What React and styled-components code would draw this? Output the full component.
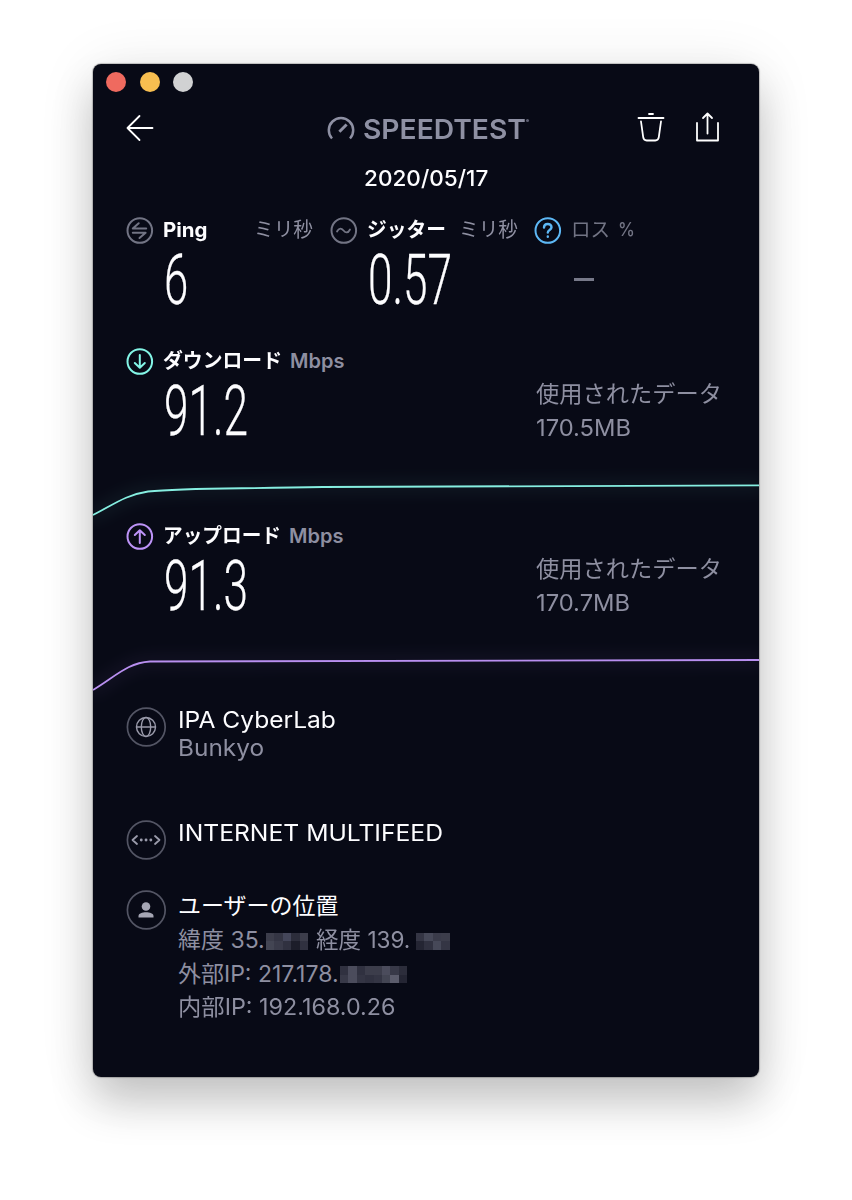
import React, { useLayoutEffect, useRef, useState } from "react";
import styled, { createGlobalStyle } from "styled-components";

const Global = createGlobalStyle`
  * { box-sizing: border-box; }
  html, body { margin: 0; background: #fff; }
  body { font-family: Inter, "Noto Sans CJK JP", sans-serif; height: 1200px; overflow: hidden; }
  svg { display: block; flex: none; overflow: visible; fill: none; stroke-linecap: round; stroke-linejoin: round; }
`;

const Desktop = styled.main`
  height: 1200px;
  padding: 64px 93px;
`;

const Window = styled.section`
  width: 666px;
  height: 1013px;
  background: #080a16;
  border-radius: 8px;
  overflow: hidden;
  display: flex;
  flex-direction: column;
  box-shadow: 0 0 1px 1px rgba(0, 0, 0, 0.22), 0 26px 44px rgba(0, 0, 0, 0.2), 0 4px 60px rgba(0, 0, 0, 0.09);
`;

const TitleBar = styled.div`
  height: 35px;
  padding: 7.5px 0 0 13.3px;
  display: flex;
  gap: 13.3px;
`;

const Light = styled.i`
  width: 20px;
  height: 20px;
  border-radius: 50%;
  background: ${(p) => p.$color};
`;

const Toolbar = styled.header`
  height: 60px;
  padding: 0 39px 2px 33px;
  display: grid;
  grid-template-columns: 200px 1fr 83px;
  align-items: center;
`;

const Brand = styled.div`
  display: flex;
  align-items: center;
  gap: 8px;
  padding-left: 0.5px;
  color: #8e90a3;
`;

const Wordmark = styled.div`
  display: flex;
  align-items: flex-start;
  gap: 0.5px;
  padding-top: 4px;
`;

const TradeMark = styled.i`
  width: 3px;
  height: 3px;
  margin-top: 5px;
  border-radius: 50%;
  background: #5c5e70;
`;

const Actions = styled.div`
  display: flex;
  justify-content: space-between;
  margin-top: -3px;
`;

const DateLine = styled.div`
  height: 38px;
  display: flex;
  justify-content: center;
  align-items: center;
`;

const Metrics = styled.div`
  height: 150px;
  padding: 19px 0 0 33px;
  display: grid;
  grid-template-columns: 204px 204px 1fr;
`;

const Head = styled.div`
  display: flex;
  align-items: center;
  height: 28px;
`;

const Names = styled.div`
  display: flex;
  align-items: center;
  margin-left: 10px;
  padding-top: 0.5px;
  gap: ${(p) => p.$gap || 8}px;
`;

const Value = styled.div`
  margin: 7.500px 0 0 37.500px;
  height: 57px;
  -webkit-text-stroke: 0.3px #fff;
`;

const Dash = styled.div`
  width: 20px;
  height: 2.5px;
  margin: 34px 0 0 40px;
  background: #777989;
`;

const Transfer = styled.section`
  height: 175px;
  display: flex;
  flex-direction: column;
`;

const TransferBody = styled.div`
  height: 125px;
  padding: 0 0 0 33px;
  display: grid;
  grid-template-columns: 409.500px 1fr;
`;

const Usage = styled.div`
  padding-top: 31px;
`;

const Line = styled.div`
  height: ${(p) => p.$h || 34}px;
  display: flex;
  align-items: center;
`;

const Details = styled.section`
  padding: 10px 33px 0;
`;

const Detail = styled.div`
  display: flex;
  gap: 12px;
  height: ${(p) => p.$h}px;
`;

const FitBox = styled.span`
  display: block;
  flex: none;
  width: ${(p) => p.$w}px;
  line-height: ${(p) => p.$leading};
  white-space: nowrap;
  font-size: ${(p) => p.$size}px;
  font-weight: ${(p) => p.$weight};
  font-family: ${(p) => p.$font || "inherit"};
  color: ${(p) => p.$color};
`;

const FitInner = styled.span`
  display: inline-block;
  transform-origin: 0 50%;
`;

const WHITE = "#fdfdff";
const GREY = "#8e8fa1";
const DIM = "#727484";

function Fit({ w, size, weight = 400, color = WHITE, font, leading = 1.2, children }) {
  const ref = useRef(null);
  const [scale, setScale] = useState(1);
  useLayoutEffect(() => {
    setScale(w / ref.current.offsetWidth);
  }, [w, children]);
  return (
    <FitBox $w={w} $size={size} $weight={weight} $color={color} $font={font} $leading={leading}>
      <FitInner ref={ref} style={{ transform: `scaleX(${scale})` }}>{children}</FitInner>
    </FitBox>
  );
}

const Big = ({ w, children }) => (
  <Fit w={w} size={71} weight={300} leading={0.8} font={'Roboto, sans-serif'}>{children}</Fit>
);

const Mosaic = styled.span`
  display: grid;
  grid-template-columns: repeat(${(p) => p.$cols}, 8.4px);
  grid-auto-rows: 8.5px;
  margin-left: ${(p) => p.$left || 1}px;
  margin-right: ${(p) => p.$right || 0}px;
`;

const Cell = styled.i`
  background: ${(p) => p.$c};
`;

function Redacted({ cells, ...rest }) {
  return (
    <Mosaic $cols={cells.length / 2} {...rest}>
      {cells.map((c, i) => <Cell key={i} $c={c} />)}
    </Mosaic>
  );
}

const Ring = ({ color, children }) => (
  <svg width="27" height="27" viewBox="0 0 27 27" stroke={color} strokeWidth="2">
    <circle cx="13.800" cy="13.500" r="12.300" />
    {children}
  </svg>
);

const BigRing = ({ children }) => (
  <svg width="40" height="40" viewBox="0 0 40 40" stroke="#9a9bab" strokeWidth="1.4">
    <circle cx="20.3" cy="20" r="18.900" stroke="#535564" strokeWidth="1.7" />
    {children}
  </svg>
);

function Graph({ id, color, d }) {
  return (
    <svg width="666" height="50" viewBox="0 0 666 50">
      <defs>
        <filter id={id} x="-5%" y="-100%" width="110%" height="300%">
          <feGaussianBlur stdDeviation="8" />
        </filter>
      </defs>
      <path d={d} stroke={color} strokeWidth="10" opacity="0.08" filter={`url(#${id})`} />
      <path d={d} stroke={color} strokeWidth="1.8" strokeLinecap="butt" />
    </svg>
  );
}

function TransferBlock({ icon, name, nameW, value, used, usedW, graph }) {
  return (
    <Transfer>
      <TransferBody>
        <div>
          <Head>
            {icon}
            <Names>
              <Fit w={nameW} size={20} weight={700}>{name}</Fit>
              <Fit w={54} size={20} weight={600} color={GREY}>Mbps</Fit>
            </Names>
          </Head>
          <Value><Big w={84}>{value}</Big></Value>
        </div>
        <Usage>
          <Line><Fit w={186} size={23} color={GREY}>使用されたデータ</Fit></Line>
          <Line><Fit w={usedW} size={23} color={GREY}>{used}</Fit></Line>
        </Usage>
      </TransferBody>
      {graph}
    </Transfer>
  );
}

export default function App() {
  return (
    <>
      <Global />
      <Desktop>
        <Window>
          <TitleBar>
            <Light $color="#ef6a5f" />
            <Light $color="#f7be50" />
            <Light $color="#d1d2d3" />
          </TitleBar>
          <Toolbar>
            <svg width="28" height="26" viewBox="0 0 28 26" stroke="#fff" strokeWidth="1.8">
              <path d="M13.500 1 1.500 13l12 12M1.500 13h25" />
            </svg>
            <Brand>
              <svg width="28" height="26" viewBox="0 0 28 26" stroke="#8e90a3" strokeWidth="2.500">
                <path d="M5 23.500A12.200 12.200 0 1 1 23 23.500" strokeLinecap="butt" />
                <path d="m12.400 16.700 7.200-7.200" strokeWidth="3" strokeLinecap="butt" />
              </svg>
              <Wordmark>
                <Fit w={163} size={27} weight={600} color="#8e90a3">SPEEDTEST</Fit>
                <TradeMark />
              </Wordmark>
            </Brand>
            <Actions>
              <svg width="28" height="30" viewBox="0 0 28 30" stroke="#fff" strokeWidth="1.8">
                <path d="M1.500 6h25M12 2h4M4 9.500l2.200 15.700c.3 2.200 1.400 3.300 3.500 3.300h8.600c2.100 0 3.200-1.100 3.500-3.300L24 9.500" />
              </svg>
              <svg width="24" height="30" viewBox="0 0 24 30" stroke="#fff" strokeWidth="1.8">
                <path d="M1 11v17.500h21V11M11.500 21.500V2M7 6l4.500-4.500L16 6" />
              </svg>
            </Actions>
          </Toolbar>
          <DateLine><Fit w={124} size={22} weight={500}>2020/05/17</Fit></DateLine>

          <Metrics>
            <div>
              <Head>
                <Ring color={DIM}>
                  <path d="M20.200 11.600H6.800L12.700 6.200M6.800 15.700h12.800L13.500 21" />
                </Ring>
                <Names $gap={47}>
                  <Fit w={44} size={20} weight={700}>Ping</Fit>
                  <Fit w={59} size={20} color={GREY}>ミリ秒</Fit>
                </Names>
              </Head>
              <Value><Big w={24}>6</Big></Value>
            </div>
            <div>
              <Head>
                <Ring color={DIM}>
                  <path d="M7 14.500c2-4 4.500-3.500 6.500-1s4.500 3 6.500-1" strokeWidth="1.8" />
                </Ring>
                <Names $gap={13}>
                  <Fit w={79} size={20} weight={700}>ジッター</Fit>
                  <Fit w={59} size={20} color={GREY}>ミリ秒</Fit>
                </Names>
              </Head>
              <Value><Big w={84}>0.57</Big></Value>
            </div>
            <div>
              <Head>
                <Ring color="#5db8f5">
                  <path d="M10 10.500c0-4.700 7.500-4.700 7.500-.2 0 2.700-3.700 2.600-3.700 5.200M13.800 19.500v.2" strokeWidth="2.400" />
                </Ring>
                <Names>
                  <Fit w={39} size={20} color={DIM}>ロス</Fit>
                  <Fit w={17} size={19} weight={500} color={DIM}>%</Fit>
                </Names>
              </Head>
              <Dash />
            </div>
          </Metrics>

          <TransferBlock
            icon={<Ring color="#83f5e6"><path d="M13.800 7v12.500M8.800 15l5 4.800 5-4.800" /></Ring>}
            name="ダウンロード" nameW={119} value="91.2" used="170.5MB" usedW={95}
            graph={<Graph id="glow-down" color="#86efe1" d="M0 43C20 33 32 23 55 19.500 90 16 130 17 230 15 330 15 430 14 666 13.300" />}
          />
          <TransferBlock
            icon={<Ring color="#bd93f7"><path d="M13.800 20V7.500M8.800 12l5-4.800 5 4.800" /></Ring>}
            name="アップロード" nameW={118} value="91.3" used="170.7MB" usedW={94}
            graph={<Graph id="glow-up" color="#b98ff0" d="M0 43C22 30 34 16 57 14.500 100 13 180 13 666 13" />}
          />

          <Details>
            <Detail $h={113}>
              <BigRing>
                <circle cx="20" cy="20" r="9.500" />
                <ellipse cx="20" cy="20" rx="4.700" ry="9.500" />
                <path d="M10.500 20h19" />
              </BigRing>
              <div>
                <Line $h={28}><Fit w={158} size={23}>IPA CyberLab</Fit></Line>
                <Line $h={28}><Fit w={86} size={23} color={GREY}>Bunkyo</Fit></Line>
              </div>
            </Detail>
            <Detail $h={70}>
              <BigRing>
                <path d="m11 16-4.500 4 4.500 4M29 16l4.500 4-4.500 4" strokeWidth="1.800" />
                <path d="M15.200 20h.1M20 20h.1M24.800 20h.1" strokeWidth="2.800" />
              </BigRing>
              <Line $h={28}><Fit w={265} size={23}>INTERNET MULTIFEED</Fit></Line>
            </Detail>
            <Detail $h={140}>
              <BigRing>
                <g fill="#a5a6b4" stroke="none">
                  <circle cx="20" cy="16.500" r="4.300" />
                  <path d="M12.500 27.500v-1.500c0-5 15-5 15 0v1.500z" />
                </g>
              </BigRing>
              <div>
                <Line><Fit w={161} size={23}>ユーザーの位置</Fit></Line>
                <Line>
                  <Fit w={87} size={23} color={GREY}>緯度 35.</Fit>
                  <Redacted $right={8} cells={["#3c3d4b", "#343544", "#44465a", "#2c2d3b", "#3c3d4b", "#434553", "#3a3b4a", "#303140", "#1c1d2a", "#303140"]} />
                  <Fit w={94} size={23} color={GREY}>経度 139.</Fit>
                  <Redacted $left={6} cells={["#343544", "#464858", "#3a3b4a", "#3c3d4b", "#242533", "#303140", "#464858", "#343544"]} />
                </Line>
                <Line $h={33}>
                  <Fit w={161} size={23} color={GREY}>外部IP: 217.178.</Fit>
                  <Redacted cells={["#303140", "#4b4c5c", "#303140", "#3c3d4b", "#3c3d4b", "#4b4c5c", "#383948", "#2c2d3b", "#383948", "#4b4c5c", "#343544", "#303140", "#343544", "#434553", "#5b5c6c", "#242533"]} />
                </Line>
                <Line $h={33}><Fit w={217} size={23} color={GREY}>内部IP: 192.168.0.26</Fit></Line>
              </div>
            </Detail>
          </Details>
        </Window>
      </Desktop>
    </>
  );
}
